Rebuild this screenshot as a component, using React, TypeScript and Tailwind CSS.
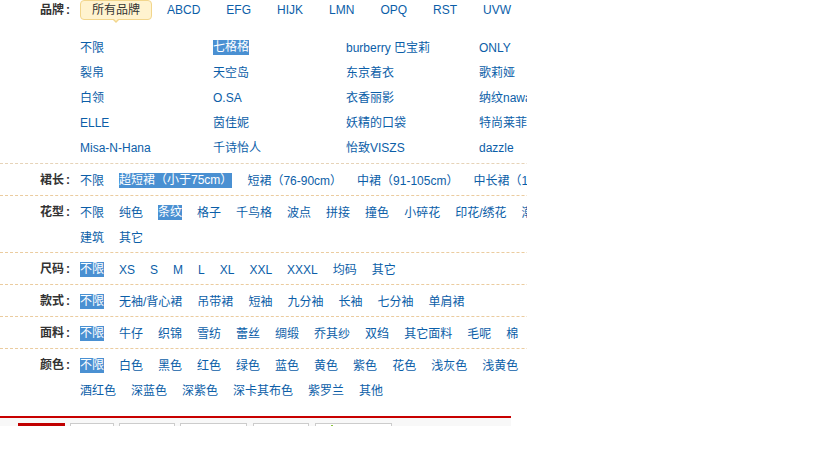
import React from 'react';

type Item = { text: string; on?: boolean };

const brandLetters = ['ABCD', 'EFG', 'HIJK', 'LMN', 'OPQ', 'RST', 'UVW', 'XYZ'];

const brands: Item[][] = [
  [{ text: '不限' }, { text: '七格格', on: true }, { text: 'burberry 巴宝莉' }, { text: 'ONLY' }],
  [{ text: '裂帛' }, { text: '天空岛' }, { text: '东京着衣' }, { text: '歌莉娅' }],
  [{ text: '白领' }, { text: 'O.SA' }, { text: '衣香丽影' }, { text: '纳纹nawain' }],
  [{ text: 'ELLE' }, { text: '茵佳妮' }, { text: '妖精的口袋' }, { text: '特尚莱菲' }],
  [{ text: 'Misa-N-Hana' }, { text: '千诗怡人' }, { text: '怡致VISZS' }, { text: 'dazzle' }],
];

const list = (sel: number, ...names: string[]): Item[] =>
  names.map((text, i) => ({ text, on: i === sel }));

const filters: { label: string; lines: Item[][] }[] = [
  {
    label: '裙长',
    lines: [list(1, '不限', '超短裙（小于75cm）', '短裙（76-90cm）', '中裙（91-105cm）', '中长裙（106-120cm）')],
  },
  {
    label: '花型',
    lines: [
      list(2, '不限', '纯色', '条纹', '格子', '千鸟格', '波点', '拼接', '撞色', '小碎花', '印花/绣花', '潮流图案'),
      list(-1, '建筑', '其它'),
    ],
  },
  {
    label: '尺码',
    lines: [list(0, '不限', 'XS', 'S', 'M', 'L', 'XL', 'XXL', 'XXXL', '均码', '其它')],
  },
  {
    label: '款式',
    lines: [list(0, '不限', '无袖/背心裙', '吊带裙', '短袖', '九分袖', '长袖', '七分袖', '单肩裙')],
  },
  {
    label: '面料',
    lines: [list(0, '不限', '牛仔', '织锦', '雪纺', '蕾丝', '绸缎', '乔其纱', '双绉', '其它面料', '毛呢', '棉')],
  },
  {
    label: '颜色',
    lines: [
      list(0, '不限', '白色', '黑色', '红色', '绿色', '蓝色', '黄色', '紫色', '花色', '浅灰色', '浅黄色', '米色'),
      list(-1, '酒红色', '深蓝色', '深紫色', '深卡其布色', '紫罗兰', '其他'),
    ],
  },
];

function Label({ text, h }: { text: string; h: number }) {
  return (
    <div
      className="w-[80px] shrink-0 pr-[10px] text-right font-bold text-[#333]"
      style={{ lineHeight: `${h}px` }}
    >
      {text}
      <span className="ml-[2px]">:</span>
    </div>
  );
}

function Link({ item }: { item: Item }) {
  return item.on ? (
    <span className="bg-[#4a90d2] text-white leading-[15px]">{item.text}</span>
  ) : (
    <span className="text-[#0b5ea8]">{item.text}</span>
  );
}

export default function App() {
  return (
    <div className="w-[819px] h-[460px] bg-white overflow-hidden text-[12px] font-['Liberation_Sans','Noto_Sans_CJK_SC',sans-serif]">
      <div className="w-[527px] overflow-hidden">
        <div className="w-[680px]">
          {/* brand filter */}
          <div className="flex pb-[3px] border-b border-dashed border-[#e6d3b8]">
            <Label text="品牌" h={20} />
            <div>
              <div className="flex items-center h-[20px] whitespace-nowrap">
                <span className="relative h-[20px] px-[11px] leading-[18px] border border-[#f2d68c] bg-[#fff3cf] rounded-[4px] text-[#333]">
                  所有品牌
                  <span className="absolute left-1/2 -translate-x-1/2 top-full w-0 h-0 border-x-[4px] border-x-transparent border-t-[4px] border-t-[#f2d68c]" />
                  <span className="absolute left-1/2 -translate-x-1/2 top-[calc(100%-1px)] w-0 h-0 border-x-[3px] border-x-transparent border-t-[3px] border-t-[#fff3cf]" />
                </span>
                <div className="flex gap-[26px] ml-[15px] text-[#0b5ea8]">
                  {brandLetters.map((l) => (
                    <span key={l}>{l}</span>
                  ))}
                </div>
              </div>
              <div className="pt-[15px] grid grid-cols-[133px_133px_133px_133px]">
                {brands.flat().map((b, i) => (
                  <div key={i} className="h-[25px] flex items-center whitespace-nowrap">
                    <Link item={b} />
                  </div>
                ))}
              </div>
            </div>
          </div>

          {/* attribute filters */}
          {filters.map((f, i) => (
            <div
              key={f.label}
              className={`flex pt-[4px] pb-[2px] ${
                i < filters.length - 1 ? 'border-b border-dashed border-[#ebcc9f]' : ''
              }`}
            >
              <Label text={f.label} h={25} />
              <div>
                {f.lines.map((line, j) => (
                  <div key={j} className="flex items-center h-[25px] gap-[15px] whitespace-nowrap">
                    {line.map((it) => (
                      <Link key={it.text} item={it} />
                    ))}
                  </div>
                ))}
              </div>
            </div>
          ))}
        </div>
      </div>

      {/* result tabs bar */}
      <div className="mt-[11px] w-[511px]">
        <div className="h-[2px] bg-[#c80000]" />
        <div className="h-[8px] bg-[#f8f8f8] overflow-hidden flex gap-[5px] pl-[18px] pt-[5px]">
          <div className="w-[47px] h-[20px] shrink-0 bg-[#c00000]" />
          <div className="w-[44px] h-[20px] shrink-0 border border-[#ccc] bg-white" />
          <div className="w-[56px] h-[20px] shrink-0 border border-[#ccc] bg-white" />
          <div className="w-[67px] h-[20px] shrink-0 border border-[#ccc] bg-white" />
          <div className="w-[56px] h-[20px] shrink-0 border border-[#ccc] bg-white ml-[1px]" />
          <div className="relative w-[77px] h-[20px] shrink-0 border border-[#ccc] bg-white ml-[1px]">
            <span className="absolute left-[15px] top-[1px] w-[2px] h-[3px] bg-[#8cc63f]" />
          </div>
        </div>
      </div>
    </div>
  );
}
